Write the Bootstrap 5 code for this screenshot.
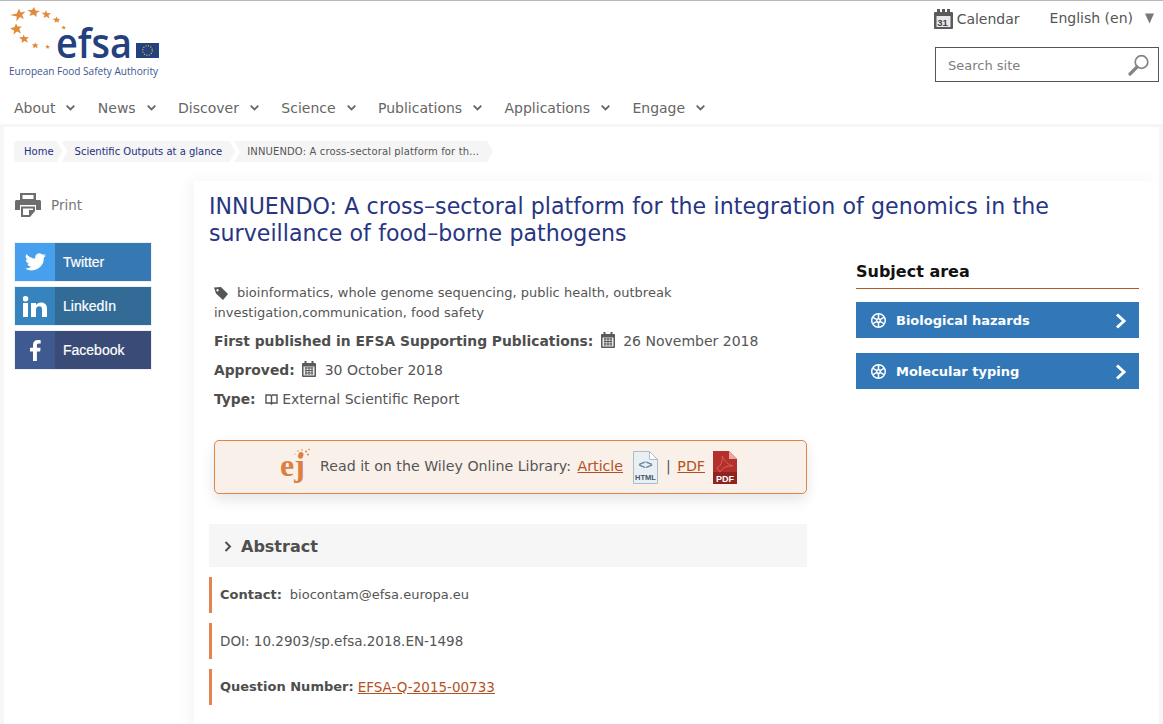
<!DOCTYPE html>
<html lang="en"><head><meta charset="utf-8"><title>EFSA</title>
<link rel="stylesheet" href="https://cdn.jsdelivr.net/npm/bootstrap@5.3.0/dist/css/bootstrap.min.css">
<style>
html,body{height:724px;overflow:hidden}
body{background:#f6f6f6;font-family:"DejaVu Sans",Verdana,sans-serif;color:#555;font-size:13px}
.efsa-top{background:#fff;border-top:1px solid #b8b8b8;height:124px}
.efsa-brand{padding:4px 0 0 9px;height:84px}
.efsa-tools{padding:8px 4px 0 0;width:240px}
.efsa-toolrow{height:21px;padding-right:5px}
.efsa-tool{font-size:14px;color:#555;text-decoration:none;line-height:18px}
.efsa-cal{margin-right:30px}
.efsa-lang{gap:12px}
.efsa-search{width:224px;height:35px;border:1px solid #555;margin:17px 0 0 auto;padding:0 8px 0 12px}
.efsa-search input{border:0;outline:0;width:170px;font-size:13px;padding:2px 0 0;color:#555}
.efsa-search input::placeholder{color:#7d7d7d;opacity:1}
.efsa-mainnav{padding:0 0 0 14px;gap:22.4px;margin-top:13px}
.efsa-mainnav a{font-size:14px;color:#666;text-decoration:none;line-height:20px;display:flex;align-items:center;gap:11px}
.efsa-shell{background:#fff;margin:3px 4px 0;height:600px}
.efsa-crumbs{margin:0;padding:14px 0 0 10px;height:55px;list-style:none}
.efsa-crumbs li{background:#f5f5f5;height:21px;font-size:10px;line-height:21px;padding:0 7px 0 10px;color:#555;display:flex;align-items:center}
.efsa-crumbs li+li{clip-path:polygon(0 0,calc(100% - 6px) 0,100% 50%,calc(100% - 6px) 100%,0 100%,6px 50%);margin-left:-1px;padding:0 13px 0 13px}
.efsa-crumbs li:first-child{clip-path:polygon(0 0,calc(100% - 6px) 0,100% 50%,calc(100% - 6px) 100%,0 100%);border-radius:3px 0 0 3px;padding-right:9px}
.efsa-crumbs li:last-child{letter-spacing:.13px;padding-right:14px}
.efsa-crumbs a{color:#1f2f7f;text-decoration:none}
.efsa-side{width:190px;flex:none;padding:0 0 0 11px}
.efsa-print{font-size:13.5px;color:#777;gap:10px;height:30px;margin:8px 0 22px 0}
.efsa-soc{display:flex;width:138px;height:40px;margin:0 0 4px -1px;border:1px solid #eef2f6;color:#fff;font:14px/38px "Liberation Sans",Arial,sans-serif;text-decoration:none}
.efsa-soc span{width:40px;flex:none;display:flex;align-items:center;justify-content:center}
.efsa-soc b{font-weight:400;padding-left:8px;-webkit-text-stroke:.2px #fff}
.tw{background:#3578b2}.tw span{background:#47a0ee}
.li{background:#316b96}.li span{background:#3584bd}
.fb{background:#394b76}.fb span{background:#3f5a90}
.efsa-main{flex:1;box-shadow:-6px -2px 12px rgba(0,0,0,.035);padding:0 20px 0 15px;margin-top:-1px;min-width:0;min-height:560px}
.efsa-title{font-size:22.1px;line-height:27px;color:#273583;font-weight:400;margin:12px 0 0;word-spacing:.2px;letter-spacing:.03px}
.efsa-left{width:598px;flex:none;padding-top:36px}
.efsa-right{width:283px;flex:none;margin-left:49px;padding-top:15px}
.efsa-tags{padding-left:5px;line-height:20px;margin-bottom:8px}
.efsa-tags svg{margin-right:6px}
.efsa-meta{padding-left:5px;font-size:14px;line-height:20px;margin-bottom:9px}
.efsa-meta b{color:#4e4e4e;font-size:13.85px}
.efsa-meta svg{vertical-align:-2px;margin:0 4px 0 3px}
.efsa-meta .efsa-book{vertical-align:-1px;margin-left:5px}
.efsa-wiley{margin:31px 0 30px 5px;height:54px;background:#f9f0ea;border:1px solid #e38346;border-radius:5px;box-shadow:0 6px 14px rgba(0,0,0,.1);padding:0 4px 0 0;font-size:14.2px;gap:0}
.efsa-wiley a,.efsa-q a{color:#b4521f}
.efsa-wiley span a{margin-left:2px}
.efsa-htmlicon{margin:0 8px 0 10px}
.efsa-q a{font-size:13.5px}
.efsa-abs{background:#f6f6f6;height:43px;padding:2px 0 0 15px;font-size:16px;font-weight:700;color:#4f4f4f;gap:9px;margin-bottom:10px}
.efsa-fact{border-left:3px solid #e38450;height:36px;padding-left:8px;margin-bottom:10px;display:flex;align-items:center;font-size:13px;color:#555}
.efsa-fact b{color:#4e4e4e}
.efsa-doi{font-size:13.5px}
.efsa-subj{font-size:16px;font-weight:700;color:#111;line-height:20px;padding-bottom:6px;border-bottom:1px solid #b05a2a;margin-bottom:13px}
.efsa-tile{height:36px;margin-bottom:15px;background:#3278b8;color:#fff;border-radius:0;border:0;font-size:13px;font-weight:700;padding:1px 12px 0 14px;text-decoration:none}
.efsa-tile svg:first-child{margin-right:9px}
.efsa-tile:hover{background:#3278b8;color:#fff}
</style></head>
<body>
<header class="efsa-top d-flex flex-column">
 <div class="d-flex justify-content-between">
  <div class="efsa-brand">
   <svg width="152" height="75" viewBox="0 0 152 75" role="img" aria-label="EFSA logo">
    <g fill="#e08a3c">
     <polygon points="10,3.500 11.600,7.600 16.500,6.500 13,10 15,14 11,12 7.300,16.200 7.800,11.600 1,10 7.800,8.500"/>
     <polygon points="25,2 26.500,5.500 31,6 27.500,8 27.500,12 24.500,9.500 20.500,11 22,7.500 18.500,5 23,5"/>
     <polygon points="37,5 38,8 42,8.200 39.500,10.300 40.500,13.500 37.500,11.500 34.500,13 35.500,10 32.500,7.500 36,7.800"/>
     <polygon points="47.500,11.500 48.300,13.600 51,14 49.500,15.500 50,17.800 47.800,16.600 45.500,17.800 46,15.500 43.500,14 46.600,13.600"/>
     <polygon points="54.500,20.500 55.200,21.800 57,22 55.800,23 56.200,24.500 54.600,23.600 53,24.500 53.500,23 52.300,22 54,21.800"/>
     <polygon points="7,18.500 8.600,21.600 12.800,21.500 10.200,24 12,28.500 8,26.500 4.500,29.500 5.200,25.500 1,23.500 5.600,22"/>
     <polygon points="14.500,29.500 16,32 20,32.200 17.500,34.200 19,37.500 15.500,36 12.500,38 13,34.800 10,32.500 13.800,32"/>
     <polygon points="26,37.500 27,39.300 29.500,39.300 27.800,40.800 28.700,43.200 26.300,42 24,43.300 24.600,41 22.700,39.500 25.300,39.200"/>
     <polygon points="38.500,39.500 39.200,41 41,41.200 39.600,42.200 40.200,43.800 38.600,43 37,43.800 37.500,42.200 36,41.200 37.900,41"/>
    </g>
    <text x="47" y="53" font-family="Open Sans,Liberation Sans,sans-serif" font-size="41" font-weight="600" fill="#24417f" textLength="76" lengthAdjust="spacingAndGlyphs">efsa</text>
    <rect x="127" y="38" width="23" height="15" fill="#24417f"/>
    <circle cx="138.500" cy="45.500" r="4.800" fill="none" stroke="#d4b73a" stroke-width="1.300" stroke-dasharray="1.100 1.400"/>
    <text x="0" y="69.500" font-family="Open Sans,Liberation Sans,sans-serif" font-size="10.300" fill="#3b5590" textLength="149" lengthAdjust="spacingAndGlyphs">European Food Safety Authority</text>
   </svg>
  </div>
  <div class="efsa-tools">
   <div class="efsa-toolrow d-flex justify-content-end align-items-start">
    <a href="#" class="efsa-tool efsa-cal d-flex align-items-center gap-1">
     <svg width="19" height="20" viewBox="0 0 19 20"><rect x="0" y="3" width="19" height="17" rx="1" fill="#5a5a5a"/><rect x="3" y="0" width="3" height="5" fill="#5a5a5a"/><rect x="8" y="0" width="3" height="5" fill="#5a5a5a"/><rect x="13" y="0" width="3" height="5" fill="#5a5a5a"/><rect x="2.500" y="7" width="14" height="11" fill="#e8e8e8"/><text x="3.300" y="16.500" font-size="9.500" font-weight="700" fill="#444" font-family="Liberation Sans,sans-serif">31</text></svg>
     Calendar</a>
    <a href="#" class="efsa-tool efsa-lang d-flex align-items-center">English (en)
     <svg width="9" height="11" viewBox="0 0 10 11"><polygon points="0,0 10,0 5,11" fill="#777"/></svg></a>
   </div>
   <form class="efsa-search d-flex align-items-center justify-content-between">
    <input type="text" placeholder="Search site" aria-label="Search site">
    <svg width="22" height="22" viewBox="0 0 22 22" fill="none" stroke="#858585"><circle cx="13.500" cy="8" r="6.300" stroke-width="1.700"/><path d="M9 13 L2 20" stroke-width="3.200" stroke-linecap="round"/></svg>
   </form>
  </div>
 </div>
 <nav class="efsa-mainnav d-flex">
  <a href="#">About <svg width="9" height="6" viewBox="0 0 9 6" fill="none" stroke="#666" stroke-width="1.800"><path d="M.7.7 4.500 4.500 8.300.7"/></svg></a>
  <a href="#">News <svg width="9" height="6" viewBox="0 0 9 6" fill="none" stroke="#666" stroke-width="1.800"><path d="M.7.7 4.500 4.500 8.300.7"/></svg></a>
  <a href="#">Discover <svg width="9" height="6" viewBox="0 0 9 6" fill="none" stroke="#666" stroke-width="1.800"><path d="M.7.7 4.500 4.500 8.300.7"/></svg></a>
  <a href="#">Science <svg width="9" height="6" viewBox="0 0 9 6" fill="none" stroke="#666" stroke-width="1.800"><path d="M.7.7 4.500 4.500 8.300.7"/></svg></a>
  <a href="#">Publications <svg width="9" height="6" viewBox="0 0 9 6" fill="none" stroke="#666" stroke-width="1.800"><path d="M.7.7 4.500 4.500 8.300.7"/></svg></a>
  <a href="#">Applications <svg width="9" height="6" viewBox="0 0 9 6" fill="none" stroke="#666" stroke-width="1.800"><path d="M.7.7 4.500 4.500 8.300.7"/></svg></a>
  <a href="#">Engage <svg width="9" height="6" viewBox="0 0 9 6" fill="none" stroke="#666" stroke-width="1.800"><path d="M.7.7 4.500 4.500 8.300.7"/></svg></a>
 </nav>
</header>
<div class="efsa-shell">
 <ol class="efsa-crumbs d-flex">
  <li><a href="#">Home</a></li>
  <li><a href="#">Scientific Outputs at a glance</a></li>
  <li>INNUENDO: A cross-sectoral platform for th...</li>
 </ol>
 <div class="d-flex">
  <aside class="efsa-side">
   <div class="efsa-print d-flex align-items-center">
    <svg width="26" height="24" viewBox="0 0 26 24"><path fill="#6d6d6d" d="M5 0h16v7H5zM7.500 2v4h11V2zM0 8.500Q0 7 1.500 7h23Q26 7 26 8.500V17h-5v-5H5v5H0z"/><path fill="#6d6d6d" d="M6 13.500h14V18l-5 6H6zM8 15.500V22h6v-5h4v-1.500z"/></svg>
    Print</div>
   <a href="#" class="efsa-soc tw"><span><svg width="21" height="18" viewBox="0 0 24 20" fill="#fff"><path d="M24 2.400a10 10 0 0 1-2.800.8A5 5 0 0 0 23.300.500a10 10 0 0 1-3.100 1.200 4.900 4.900 0 0 0-8.400 4.500A14 14 0 0 1 1.700.900a4.900 4.900 0 0 0 1.500 6.600 5 5 0 0 1-2.200-.600 4.900 4.900 0 0 0 3.900 4.900 5 5 0 0 1-2.200.1 4.900 4.900 0 0 0 4.600 3.400A9.900 9.900 0 0 1 0 17.300 14 14 0 0 0 21.500 5a10 10 0 0 0 2.500-2.600z"/></svg></span><b>Twitter</b></a>
   <a href="#" class="efsa-soc li"><span><svg width="24" height="21" viewBox="0 0 24 21" fill="#fff"><rect x="0" y="7" width="5" height="14"/><circle cx="2.500" cy="2.800" r="2.800"/><path d="M8 7h5v2c1-1.500 2.800-2.400 5-2.400 4 0 6 2.400 6 6.400v8h-5v-7.500c0-2-.8-3.200-2.700-3.200-2 0-3.300 1.300-3.300 3.400V21H8z"/></svg></span><b>LinkedIn</b></a>
   <a href="#" class="efsa-soc fb"><span><svg width="11" height="21" viewBox="0 0 11 21" fill="#fff"><path d="M3 21V11.500H0V7.800h3V5c0-3.200 2-5 4.800-5 1.300 0 2.500.1 2.900.2v3.300H8.700C7.200 3.500 6.900 4.200 6.900 5.300v2.500h3.700l-.5 3.700H6.900V21z"/></svg></span><b>Facebook</b></a>
  </aside>
  <main class="efsa-main">
   <h1 class="efsa-title">INNUENDO: A cross–sectoral platform for the integration of genomics in the surveillance of food–borne pathogens</h1>
   <div class="d-flex">
    <div class="efsa-left">
     <div class="efsa-tags"><svg width="17" height="15" viewBox="0 0 17 15"><path fill="#555" d="M0 1.500 7 1l7 7-5 6-7-6.500zM3.500 3a1.200 1.200 0 1 0 .1 0z" fill-rule="evenodd"/></svg>bioinformatics, whole genome sequencing, public health, outbreak investigation,communication, food safety</div>
     <div class="efsa-meta"><b>First published in EFSA Supporting Publications:</b> <svg width="14" height="16" viewBox="0 0 14 16"><use href="#calmini"/></svg> 26 November 2018</div>
     <div class="efsa-meta"><b>Approved:</b> <svg width="14" height="16" viewBox="0 0 14 16"><use href="#calmini"/></svg> 30 October 2018</div>
     <div class="efsa-meta"><b>Type:</b> <svg class="efsa-book" width="13" height="11" viewBox="0 0 13 11" fill="none" stroke="#555" stroke-width="1.400"><path d="M1 1h4.500l1 1 1-1H12v8H7.500l-1 1-1-1H1zM6.500 2v7"/></svg>External Scientific Report</div>
     <div class="efsa-wiley alert d-flex align-items-center justify-content-center">
      <svg width="32" height="39" viewBox="0 0 32 39" class="me-2"><text x="0" y="28" font-family="Liberation Serif,serif" font-size="32" fill="#dc7f42" font-weight="700">ej</text><g fill="#dc7f42"><circle cx="21" cy="6.500" r="2.500"/><circle cx="26" cy="3.500" r="1"/><circle cx="28" cy="6.500" r="1"/><circle cx="22" cy="2" r=".8"/><circle cx="18" cy="3" r=".7"/><circle cx="15" cy="6" r=".6"/><circle cx="29" cy="1.500" r=".8"/></g></svg>
      <span>Read it on the Wiley Online Library: <a href="#">Article</a></span>
      <svg width="25" height="33" viewBox="0 0 25 33" class="efsa-htmlicon"><path d="M.5.500h16l8 8v24H.5z" fill="#e9f0f4" stroke="#a9bcc8"/><path d="M16.500.500v8h8z" fill="#fff" stroke="#a9bcc8"/><text x="12.500" y="18" text-anchor="middle" font-family="Liberation Sans,sans-serif" font-size="12" font-weight="700" fill="#6d8ba0">&lt;&gt;</text><text x="12.500" y="29" text-anchor="middle" font-family="Liberation Sans,sans-serif" font-size="7.500" font-weight="700" fill="#456">HTML</text></svg>
      <span>| <a href="#">PDF</a></span>
      <svg width="24" height="33" viewBox="0 0 24 33" class="ms-2"><path d="M0 0h16l8 8v25H0z" fill="#b3302c"/><path d="M16 0v8h8z" fill="#e6a79d"/><path d="M4 17c5-3 6-9 5-12 2 3 4 8 11 10-6 0-10 1-13 6z" fill="none" stroke="#d8625a"/><rect y="21" width="24" height="12" fill="#8f2320"/><text x="12" y="31" text-anchor="middle" font-family="Liberation Sans,sans-serif" font-size="9" font-weight="700" fill="#fff">PDF</text></svg>
     </div>
     <div class="efsa-abs d-flex align-items-center"><svg width="8" height="11" viewBox="0 0 8 11" fill="none" stroke="#4f4f4f" stroke-width="2"><path d="M1.500 1 6 5.500 1.500 10"/></svg>Abstract</div>
     <div class="efsa-fact"><b class="me-2">Contact:</b> biocontam@efsa.europa.eu</div>
     <div class="efsa-fact efsa-doi">DOI: 10.2903/sp.efsa.2018.EN-1498</div>
     <div class="efsa-fact efsa-q"><b class="me-1">Question Number:</b> <a href="#">EFSA-Q-2015-00733</a></div>
    </div>
    <div class="efsa-right">
     <div class="efsa-subj">Subject area</div>
     <a href="#" class="efsa-tile btn d-flex align-items-center"><svg width="17" height="17" viewBox="0 0 17 17" fill="none" stroke="#fff" stroke-width="1.500"><circle cx="8.500" cy="8.500" r="6.800"/><circle cx="8.500" cy="8.500" r="1.800"/><path d="M8.500 1.700v5M8.500 10.300v5M2.600 5.100l4.300 2.500M10.100 9.400l4.300 2.500M2.600 11.900l4.300-2.500M10.100 7.600l4.300-2.500"/></svg>Biological hazards<svg class="ms-auto" width="12" height="16" viewBox="0 0 12 16" fill="none" stroke="#fff" stroke-width="3"><path d="M2 1.500 9 8l-7 6.500"/></svg></a>
     <a href="#" class="efsa-tile btn d-flex align-items-center"><svg width="17" height="17" viewBox="0 0 17 17" fill="none" stroke="#fff" stroke-width="1.500"><circle cx="8.500" cy="8.500" r="6.800"/><circle cx="8.500" cy="8.500" r="1.800"/><path d="M8.500 1.700v5M8.500 10.300v5M2.600 5.100l4.300 2.500M10.100 9.400l4.300 2.500M2.600 11.900l4.300-2.500M10.100 7.600l4.300-2.500"/></svg>Molecular typing<svg class="ms-auto" width="12" height="16" viewBox="0 0 12 16" fill="none" stroke="#fff" stroke-width="3"><path d="M2 1.500 9 8l-7 6.500"/></svg></a>
    </div>
   </div>
  </main>
 </div>
</div>
<svg width="0" height="0" class="d-block"><defs><g id="calmini"><rect x="0" y="2" width="14" height="14" rx="1" fill="#5a5a5a"/><rect x="2.500" y="0" width="2" height="4" fill="#5a5a5a"/><rect x="9.500" y="0" width="2" height="4" fill="#5a5a5a"/><rect x="1.500" y="5.500" width="11" height="9" fill="#e8e8e8"/><path d="M3 7h8M3 9.500h8M3 12h8M4 6v8M7 6v8M10 6v8" stroke="#5a5a5a"/></g></defs></svg>
</body></html>
